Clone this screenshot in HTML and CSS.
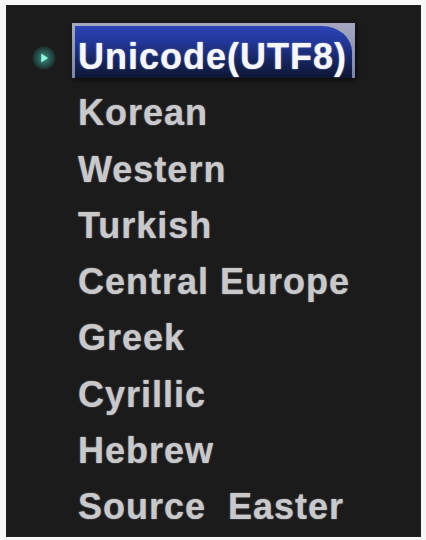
FILE: index.html
```html
<!DOCTYPE html>
<html>
<head>
<meta charset="utf-8">
<link rel="stylesheet" href="styles.css">
</head>
<body>
<div class="panel">
  <ul class="menu">
    <li class="item selected">
      <span class="gutter"><span class="bullet"><svg width="24" height="24" viewBox="0 0 24 24"><defs><radialGradient id="bg" cx="0.5" cy="0.5" r="0.5"><stop offset="0" stop-color="#3c8a7c"/><stop offset="0.6" stop-color="#27564f"/><stop offset="1" stop-color="#1c2e2b"/></radialGradient></defs><circle cx="12" cy="12" r="11.5" fill="url(#bg)"/><path d="M9.2 7.6 L16.2 12 L9.2 16.4 Z" fill="#8ff5dc"/></svg></span></span>
      <span class="label"><span class="text">Unicode(UTF8)</span></span>
    </li>
    <li class="item"><span class="gutter"></span><span class="label"><span class="text">Korean</span></span></li>
    <li class="item"><span class="gutter"></span><span class="label"><span class="text">Western</span></span></li>
    <li class="item"><span class="gutter"></span><span class="label"><span class="text">Turkish</span></span></li>
    <li class="item"><span class="gutter"></span><span class="label"><span class="text">Central Europe</span></span></li>
    <li class="item"><span class="gutter"></span><span class="label"><span class="text">Greek</span></span></li>
    <li class="item"><span class="gutter"></span><span class="label"><span class="text">Cyrillic</span></span></li>
    <li class="item"><span class="gutter"></span><span class="label"><span class="text">Hebrew</span></span></li>
    <li class="item"><span class="gutter"></span><span class="label"><span class="text">Source&nbsp; Easter</span></span></li>
  </ul>
</div>
</body>
</html>
```
FILE: styles.css
```css
html, body {
  margin: 0;
  padding: 0;
  background: #f7f7f7;
}
body {
  width: 426px;
  height: 540px;
  overflow: hidden;
}
.panel {
  margin: 5px 0 0 6px;
  width: 415px;
  height: 532px;
  background: #1b1b1c;
  box-shadow: inset 0 0 2px #333;
  box-sizing: border-box;
  padding-top: 24px;
}
.menu {
  list-style: none;
  margin: 0;
  padding: 0;
  display: flex;
  flex-direction: column;
}
.item {
  display: flex;
  align-items: center;
  height: 56.25px;
}
.gutter {
  width: 72px;
  flex: none;
  display: flex;
  align-items: center;
}
.bullet {
  margin-left: 26px;
  margin-top: 2px;
  width: 24px;
  height: 24px;
  display: block;
  filter: blur(0.7px);
}
.bullet svg { display: block; }
.label {
  position: relative;
  display: block;
  width: 290px;
  height: 56.25px;
  font-family: "Liberation Sans", Arial, sans-serif;
  font-weight: bold;
  font-size: 36px;
  letter-spacing: 1px;
  line-height: 56.25px;
  color: #c9c9cc;
  white-space: nowrap;
  text-shadow: 0 0 1.5px rgba(200,200,205,0.7);
}
.text {
  position: relative;
  z-index: 1;
  display: block;
  width: 290px;
}
.selected .label {
  color: #f6f6ff;
  text-shadow: 0 0 1.5px rgba(255,255,255,0.7);
}
.selected .label::before {
  content: "";
  position: absolute;
  left: -6px;
  top: -6px;
  width: 283px;
  height: 55px;
  background: linear-gradient(180deg, #a4a8c0 0%, #7c84a8 100%);
  box-shadow: 2px 2px 4px rgba(0,0,0,0.6);
}
.selected .label::after {
  content: "";
  position: absolute;
  left: -3px;
  top: -3px;
  width: 277px;
  height: 52px;
  border-top-right-radius: 30px 26px;
  background: linear-gradient(180deg, #2c44b6 0%, #22379a 30%, #172660 65%, #0e1633 100%);
}
```
